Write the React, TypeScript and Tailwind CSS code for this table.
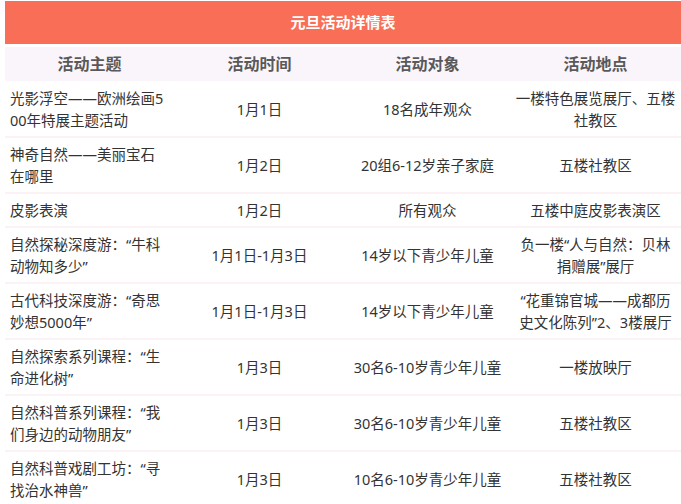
import React from "react";

interface Activity {
  topic: string;
  time: string;
  audience: string;
  place: string;
}

const activities: Activity[] = [
  {
    topic: "光影浮空——欧洲绘画500年特展主题活动",
    time: "1月1日",
    audience: "18名成年观众",
    place: "一楼特色展览展厅、五楼社教区",
  },
  {
    topic: "神奇自然——美丽宝石在哪里",
    time: "1月2日",
    audience: "20组6-12岁亲子家庭",
    place: "五楼社教区",
  },
  {
    topic: "皮影表演",
    time: "1月2日",
    audience: "所有观众",
    place: "五楼中庭皮影表演区",
  },
  {
    topic: "自然探秘深度游：“牛科动物知多少”",
    time: "1月1日-1月3日",
    audience: "14岁以下青少年儿童",
    place: "负一楼“人与自然：贝林捐赠展”展厅",
  },
  {
    topic: "古代科技深度游：“奇思妙想5000年”",
    time: "1月1日-1月3日",
    audience: "14岁以下青少年儿童",
    place: "“花重锦官城——成都历史文化陈列”2、3楼展厅",
  },
  {
    topic: "自然探索系列课程：“生命进化树”",
    time: "1月3日",
    audience: "30名6-10岁青少年儿童",
    place: "一楼放映厅",
  },
  {
    topic: "自然科普系列课程：“我们身边的动物朋友”",
    time: "1月3日",
    audience: "30名6-10岁青少年儿童",
    place: "五楼社教区",
  },
  {
    topic: "自然科普戏剧工坊：“寻找治水神兽”",
    time: "1月3日",
    audience: "10名6-10岁青少年儿童",
    place: "五楼社教区",
  },
];

export default function App() {
  return (
    <div
      className="w-[681px] h-[504px] overflow-hidden bg-white pl-[5px] pt-[1px]"
      style={{ fontFamily: '"Noto Sans", "Noto Sans CJK SC", sans-serif' }}
    >
      <div className="h-[43px] bg-[#f96e57] flex items-center justify-center text-white font-bold text-[15px]">
        元旦活动详情表
      </div>
      <table className="table-fixed border-collapse w-[676px] mt-[3px] text-[14.5px] leading-[22px] text-[#333333]">
        <colgroup>
          <col className="w-[169px]" />
          <col className="w-[171px]" />
          <col className="w-[165px]" />
          <col className="w-[171px]" />
        </colgroup>
        <thead>
          <tr className="h-[34px] bg-[#faf5fa] text-[#595959] text-[16px] font-bold">
            <th className="px-[5px] font-bold">活动主题</th>
            <th className="px-[5px] font-bold">活动时间</th>
            <th className="px-[5px] font-bold">活动对象</th>
            <th className="px-[5px] font-bold">活动地点</th>
          </tr>
        </thead>
        <tbody>
          {activities.map((a) => (
            <tr
              key={a.topic}
              className={`border-b-2 border-[#fcf1f5] ${
                a.topic.length > 10 ? "h-[56px]" : "h-[34px]"
              }`}
            >
              <td className="px-[5px] py-[4px] text-left align-middle break-all">{a.topic}</td>
              <td className="px-[5px] py-[4px] text-center align-middle">{a.time}</td>
              <td className="px-[5px] py-[4px] text-center align-middle">{a.audience}</td>
              <td className="px-[4px] py-[4px] text-center align-middle">{a.place}</td>
            </tr>
          ))}
        </tbody>
      </table>
    </div>
  );
}
